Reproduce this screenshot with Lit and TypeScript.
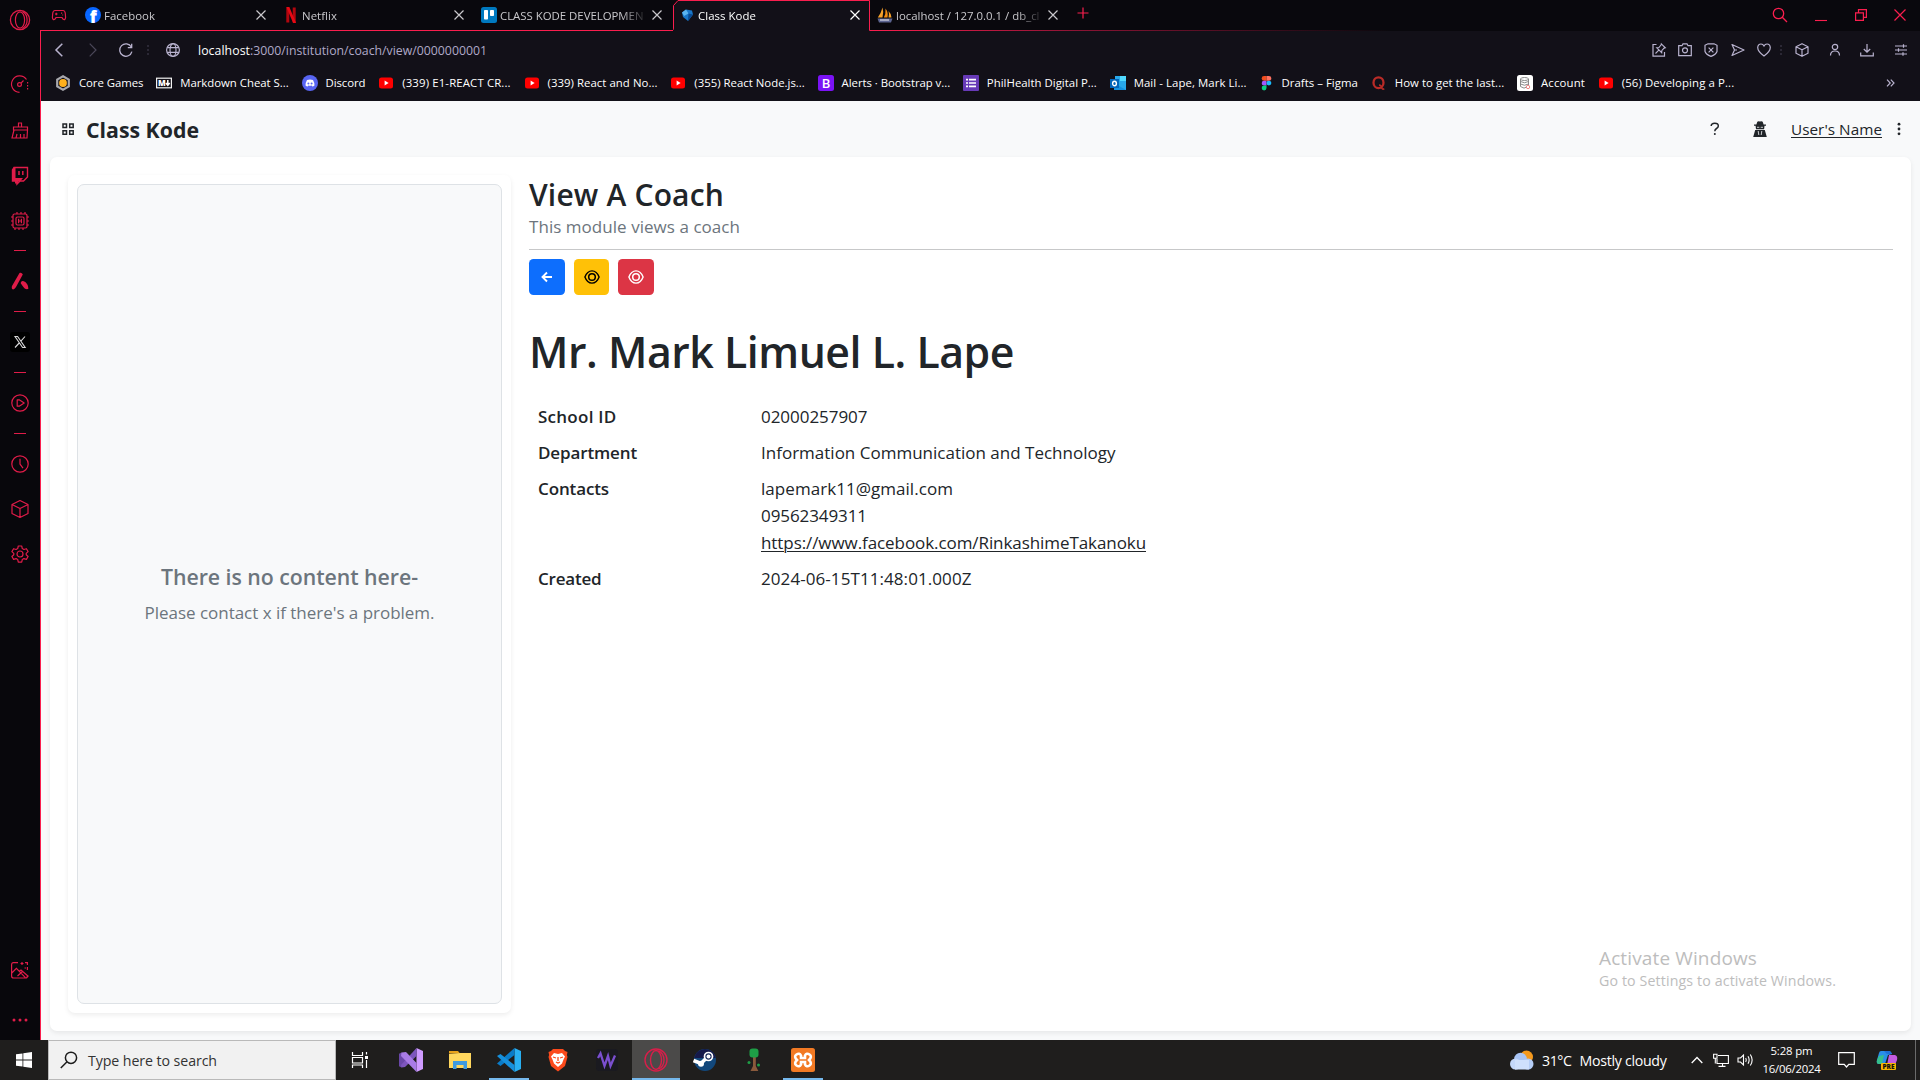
import { LitElement, html, svg, css, TemplateResult, SVGTemplateResult } from "lit";
import { customElement, property, query } from "lit/decorators.js";

/* Icons: each is drawn on its own small grid, one unit per pixel. */
const icon = (w: number, h: number, body: SVGTemplateResult) =>
  html`<svg class="icon" width=${w} height=${h} viewBox="0 0 ${w} ${h}" fill="none" stroke="currentColor" stroke-width="1.2">${body}</svg>`;

const closeX = icon(10, 10, svg`<path d="M.5 .5l9 9M9.5 .5l-9 9"/>`);

const side = {
  opera: icon(22, 22, svg`<circle cx="11" cy="11" r="9.6" stroke-width="1.3"/><ellipse cx="11" cy="11" rx="4.6" ry="8.2"/><path d="M13.5 2.6c3.2 1.8 4.6 5 4.6 8.4s-1.4 6.600-4.600 8.400"/>`),
  speed: icon(20, 20, svg`<path d="M9.500 18.300A8.200 8.200 0 1 1 16.500 5.500"/><path d="M17.600 8v9" stroke-dasharray="1.500 1.500"/><circle cx="9.500" cy="10.500" r="1.900"/><path d="M11 9.100l2.500-2.600"/>`),
  brush: icon(20, 20, svg`<path d="M8.500 7V3h3v4M3.500 7h14v3h-14zM4 10l-2 8h15l.5-8M7 14l-1 4M10.500 14v4M14 14v4"/>`),
  twitch: icon(20, 20, svg`<path d="M4 2.500h13.500v9.500l-4 4h-3.500l-3 3v-3H2.500V5z" stroke-width="1.400"/><path d="M2 4.500L5.500 2v11H9v3l-2 2.500H5V16H2zM9 13h4l-3 3.500H7z" fill="currentColor" stroke="none"/><path d="M9 6v4M12.800 6v4" stroke-width="1.500"/>`),
  cpu: icon(20, 20, svg`<rect x="3" y="3" width="14" height="14" rx="1.500"/><rect x="6" y="6" width="8" height="8" rx="1.500"/><path d="M8.600 7.800v4.400M11.400 7.800v4.400M8.600 10h2.800M7 3V1M11 3V1M15 3V1M5 17v2M9 17v2M13 17v2M3 6H1M3 10H1M3 14H1M17 6h2M17 10h2M17 14h2"/>`),
  aria: icon(20, 20, svg`<path d="M9.500 2c1.300-.8 2.500 0 3.300 1.600L6 16c-1 1.500-2 2.500-3 2.500C1.700 18 1.500 16.500 2 15zM13 10c3.500 1 5.500 4 5.300 8-2.500.6-4-.5-5.300-2.500l-2.300-3.300c0-1.200 1-2.500 2.300-2.200z" fill="currentColor" stroke="none"/>`),
  x: icon(20, 20, svg`<rect width="20" height="20" rx="3" fill="#000" stroke="none"/><path d="M5 4.500h2.600l7.600 11h-2.600zM15 4.500l-4.300 4.800M9.200 11L5 15.500" stroke="#d8d8d8" stroke-width="1.100"/>`),
  play: icon(20, 20, svg`<circle cx="10" cy="10" r="8.200"/><path d="M7.200 6.800v6.400h2L14.200 10 9.200 6.800z" stroke-linejoin="round"/>`),
  clock: icon(20, 20, svg`<circle cx="10" cy="10" r="8.200"/><path d="M10 4.800V10l3 4.200"/>`),
  cube: icon(20, 20, svg`<path d="M10 1.500l8 4v9l-8 4-8-4v-9zM2 5.500l8 4 8-4M10 9.500v9" stroke-linejoin="round"/>`),
  gear: icon(20, 20, svg`<circle cx="10" cy="10" r="3"/><path d="M8.300 2h3.400l.6 2.600 1.600.9 2.500-.8 1.700 2.900-1.900 1.800v1.300l1.900 1.800-1.700 2.900-2.500-.8-1.600.9-.6 2.600H8.300l-.6-2.600-1.600-.9-2.500.8-1.700-2.900 1.900-1.800V9.400L1.900 7.600l1.700-2.900 2.500.8 1.600-.9z" stroke-linejoin="round"/>`),
  image: icon(20, 20, svg`<path d="M8 2.600H3.500Q1.600 2.600 1.600 5v11q0 2 2 2h12q1.800 0 1.800-2M1.800 13l4.600-4.600 9 9.200M9 11.500l2-1.500 7.500 6.500M12 2v3M10.500 3.500h3M15 2.600h2.400V5M17.400 7v3M14.500 8h1.500M7.500 16l5-4.500"/>`),
  dots: icon(16, 4, svg`<g fill="currentColor" stroke="none"><circle cx="2" cy="2" r="1.500"/><circle cx="8" cy="2" r="1.500"/><circle cx="14" cy="2" r="1.500"/></g>`),
};

const youtube = icon(16, 16, svg`<rect x="1" y="2.500" width="14" height="11" rx="2.500" fill="#f00" stroke="none"/><path d="M6.600 5.600v4.800L10.600 8z" fill="#fff" stroke="none"/>`);

const fav = {
  facebook: icon(16, 16, svg`<circle cx="8" cy="8" r="8" fill="#0866ff" stroke="none"/><text class="f" x="8.300" y="15.800">f</text>`),
  netflix: icon(16, 16, svg`<g stroke="none" fill="#b1060f"><rect x="3.300" y=".5" width="3" height="15"/><rect x="9.700" y=".5" width="3" height="15"/><rect x="3.300" y="-.7" width="3" height="16" fill="#e50914" transform="skewX(23) translate(0 .8)"/></g>`),
  trello: icon(16, 16, svg`<rect width="16" height="16" rx="2.500" fill="#0079bf" stroke="none"/><rect x="3" y="3" width="4" height="9.500" rx=".8" fill="#fff" stroke="none"/><rect x="9" y="3" width="4" height="6" rx=".8" fill="#fff" stroke="none"/>`),
  kode: icon(16, 16, svg`<g stroke="none"><path d="M3 5.500l4-3 6 1 1 4-5 6.500-5-4z" fill="#1976c8"/><path d="M3 5.500l4-3 2.500 4L5 9z" fill="#5ab4f0"/><path d="M9.500 6.500l4.500 1-5 6.500z" fill="#0a4a92"/></g>`),
  pma: icon(16, 16, svg`<g stroke="none"><path d="M5.500 .5Q7 5 5.500 10.500H.8Q4 6.500 5.500 .5z" fill="#f5a12b"/><path d="M8.500 1.500q3 4 2 9H6.800Q9 7 8.500 1.500z" fill="#f08a10"/><path d="M11.500 4q3 3 3 6.500h-3Q12.500 7 11.500 4z" fill="#f5a12b"/><path d="M.5 11.500h15L14 15.500H2z" fill="#5c6490"/><path d="M3 13h9" stroke="#d8d8e4"/></g>`),
  core: icon(16, 16, svg`<path d="M8 1.300l5.800 3.300v6.800L8 14.700l-5.800-3.300V4.600z" stroke="#a8a8ad" stroke-width="2.200"/><circle cx="8" cy="8" r="3.900" fill="#ffb01c" stroke="none"/>`),
  markdown: icon(16, 16, svg`<rect x=".6" y="3.200" width="14.800" height="9.600" stroke="#f2f2f2"/><text class="m" x="2" y="11">M</text><path d="M11.800 5v4.500M9.900 8l1.900 2.300L13.700 8" stroke="#fff" stroke-width="1.500"/>`),
  discord: icon(16, 16, svg`<circle cx="8" cy="8" r="8" fill="#5865f2" stroke="none"/><path d="M5 5Q8 4 11 5q1.500 2.500 1.500 5.500Q11.500 11.500 10.300 11.600l-.6-1Q8 11 6.300 10.600l-.6 1Q4.500 11.500 3.500 10.500 3.500 7.500 5 5z" fill="#fff" stroke="none"/><g fill="#5865f2" stroke="none"><circle cx="6.400" cy="8.400" r="1"/><circle cx="9.600" cy="8.400" r="1"/></g>`),
  youtube,
  bootstrap: icon(16, 16, svg`<rect width="16" height="16" rx="2.500" fill="#7b13f6" stroke="none"/><text class="b" x="8" y="12.600">B</text>`),
  forms: icon(16, 16, svg`<rect width="16" height="16" rx="1" fill="#673ab7" stroke="none"/><path d="M6 4.700h7M6 8h7M6 11.300h7M3 4.700h2M3 8h2M3 11.300h2" stroke="#fff" stroke-width="1.700"/>`),
  outlook: icon(16, 16, svg`<g stroke="none"><rect x="5" y="1" width="11" height="14" fill="#28a8ea"/><rect x="10" y="1" width="6" height="5" fill="#50d9ff"/><path d="M4 8l12 7H4z" fill="#1490df"/><rect y="4" width="9" height="9" fill="#0364b8"/></g><ellipse cx="4.500" cy="8.500" rx="1.900" ry="2.200" stroke="#fff" stroke-width="1.400"/>`),
  figma: icon(14, 16, svg`<g stroke="none" transform="translate(.5 0)"><path d="M6 1H3.600a2.400 2.400 0 0 0 0 4.800H6z" fill="#f24e1e"/><path d="M6 1h2.400a2.400 2.400 0 0 1 0 4.800H6z" fill="#ff7262"/><path d="M6 5.800H3.600a2.400 2.400 0 0 0 0 4.800H6z" fill="#a259ff"/><circle cx="8.400" cy="8.100" r="2.400" fill="#1abcfe"/><path d="M6 10.600H3.600A2.400 2.400 0 1 0 6 13z" fill="#0acf83"/></g>`),
  quora: icon(16, 16, svg`<ellipse cx="7.500" cy="7.700" rx="5" ry="5.400" stroke="#b92b27" stroke-width="2.300"/><path d="M8 10q2.500 0 3 3.500 1 1 2.300.3" stroke="#b92b27" stroke-width="1.600"/>`),
  database: icon(16, 16, svg`<rect width="16" height="16" rx="2.500" fill="#fff" stroke="none"/><g stroke="#8a8a8a" stroke-width="1"><ellipse cx="7.500" cy="4" rx="4" ry="1.500"/><path d="M3.500 4v7.500q4 3 6 .5M3.500 6.500q4 2.500 8 0M3.500 9q4 2.500 8 0M11.500 4v6"/></g><circle cx="11" cy="12" r="1.700" stroke="#e88" stroke-width="1"/>`),
};

const nav = {
  back: icon(8, 14, svg`<path d="M7.300 .7L1 7l6.300 6.300" stroke-width="1.500"/>`),
  forward: icon(8, 14, svg`<path d="M.7 .7L7 7 .7 13.300"/>`),
  reload: icon(14, 14, svg`<path d="M12.900 8.600A6.200 6.200 0 1 1 12.300 4M12.700 .8V4.600H8.800" stroke-width="1.300"/>`),
  globe: icon(14, 14, svg`<circle cx="7" cy="7" r="6.400"/><ellipse cx="7" cy="7" rx="3" ry="6.400"/><path d="M1.200 4.600h11.600M1.200 9.400h11.600"/>`),
  pin: icon(14, 14, svg`<path d="M4.500 1.500H1v11.700h11.500V9"/><path d="M9.300 .8l4 4-1.200.3-2.200 2.400-.2 2.200-5-5 2.200-.2L9 2zM6.800 7.200L3.500 10.500" stroke-width="1.100"/>`),
  camera: icon(14, 14, svg`<path d="M.7 2.700H4L5 .8h4l1 1.900h3.300v10H.7z"/><circle cx="7" cy="7.300" r="2.500"/>`),
  shield: icon(14, 14, svg`<path d="M1 2.300L4 .8h6l3 1.500v6.200Q12 11.500 7 13.400 2 11.500 1 8.500zM4.600 4.600l4.800 4.800M9.400 4.600L4.600 9.400"/>`),
  send: icon(14, 14, svg`<path d="M1 1.500L13 7 1 12.500 3.500 7zM3.500 7H6" stroke-linejoin="round"/>`),
  heart: icon(14, 14, svg`<path d="M7 13Q.7 8.500 .7 4.500 1 1 4 1q2 0 3 2 1-2 3-2 3 0 3.300 3.500Q13.300 8.500 7 13z"/>`),
  cube: icon(14, 14, svg`<path d="M7 .7l6 3v6.600l-6 3-6-3V3.700zM1 3.700l6 3 6-3M7 6.700v6.600" stroke-linejoin="round"/>`),
  person: icon(12, 14, svg`<circle cx="6" cy="4" r="2.700"/><path d="M1.500 12.500Q1.500 8 6 8t4.500 4.500"/>`),
  download: icon(14, 14, svg`<path d="M7 1v8M3.800 6L7 9.200 10.200 6M.7 9.500v3.300h12.600V9.500"/>`),
  sliders: icon(14, 14, svg`<path d="M1 3h12M1 7h12M1 11h12M9.500 1.300v3.400M4.500 5.300v3.400M9 9.300v3.400"/>`),
  more: icon(9, 8, svg`<path d="M1 .7L4.200 4 1 7.300M4.800 .7L8 4 4.800 7.300"/>`),
  dots: icon(2, 12, svg`<path d="M1 1v2M1 5v2M1 9v2" stroke-width="1.500"/>`),
  gamepad: icon(16, 12, svg`<path d="M4 1.500h8q2 0 2.300 3l.3 4q-.3 2.500-2 2-1-.5-1.600-2H5q-.6 1.500-1.600 2-1.700.5-2-2l.3-4q.3-3 2.300-3zM4 5h2.600M5.300 3.700v2.600M10 4.200h1.200M11.200 6h1" stroke-linejoin="round"/>`),
  plus: icon(12, 12, svg`<path d="M6 .5v11M.5 6h11"/>`),
  search: icon(16, 16, svg`<circle cx="6.500" cy="6.500" r="5.200" stroke-width="1.300"/><path d="M10.300 10.300l4.700 4.700" stroke-width="1.300"/>`),
  min: icon(12, 14, svg`<path d="M0 12.500h12" stroke-width="1.100"/>`),
  restore: icon(12, 12, svg`<path d="M.6 3.800h7.800v7.600H.6zM3.500 3.800V.6h7.900v7.800h-3"/>`),
  close: icon(12, 12, svg`<path d="M.5 .5l11 11M11.500 .5l-11 11"/>`),
};

const page = {
  grid: icon(14, 14, svg`<path d="M2 2h3.500v3.500H2zM8.700 2h3.500v3.500H8.700zM2 8.700h3.500v3.500H2zM8.700 8.700h3.500v3.500H8.700z" stroke-width="1.500"/>`),
  help: icon(10, 14, svg`<path d="M1.200 4Q1.200 1.200 4.800 1.200T8.300 4Q8.300 5.500 6.500 6.500 4.800 7.500 4.800 9.300" stroke-width="1.500"/><circle cx="4.800" cy="12" r="1" fill="currentColor" stroke="none"/>`),
  secret: icon(14, 16, svg`<g fill="currentColor" stroke="none"><path d="M4.300 .8Q5 0 7 .6q2-.6 2.700.2l.9 2.600H13v1.400h-1.500l-.4 3.400H3l-.4-3.400H1V3.400h2.400zM2.200 9h9.600l2 7H.2z"/></g><path d="M4 6.300h2.300M7.700 6.300H10M5.200 10l.6 4M8.800 10l-.6 4" stroke="#f8f9fa" stroke-width=".8"/>`),
  dots: icon(4, 14, svg`<g fill="currentColor" stroke="none"><circle cx="2" cy="2.200" r="1.400"/><circle cx="2" cy="7" r="1.400"/><circle cx="2" cy="11.800" r="1.400"/></g>`),
  arrow: icon(12, 12, svg`<path d="M11 6H1.500M6 1.500L1.500 6 6 10.500" stroke-width="1.900"/>`),
  eye: icon(16, 14, svg`<path d="M.9 7Q3.200 .9 8 .9t7.100 6.100q-2.300 6.100-7.100 6.100T.9 7z" stroke-width="1.400"/><circle cx="8" cy="7" r="3.300" stroke-width="1.500"/>`),
};

const task = {
  windows: icon(16, 16, svg`<path d="M0 2.300L6.500 1.400v6.200H0zM7.300 1.300L16 0v7.600H7.300zM0 8.400h6.500v6.200L0 13.700zM7.300 8.400H16V16l-8.700-1.300z" fill="#fff" stroke="none"/>`),
  search: icon(18, 18, svg`<circle cx="11" cy="6.800" r="5.600" stroke="#1c1c1c" stroke-width="1.500"/><path d="M7 10.800L.8 17" stroke="#1c1c1c" stroke-width="1.500"/>`),
  view: icon(18, 16, svg`<path d="M1.500 0v3.500h10V0M1.500 5.500h10v5.500h-10zM1.500 16v-3h10v3M15.500 0v2.500M15.500 8v8" stroke="#fff"/><rect x="14" y="4" width="3" height="3" fill="#fff" stroke="none"/>`),
  vs: icon(24, 24, svg`<g stroke="none"><path d="M0 5.800L2.500 4.500 6 8v8l-3.500 3.500L0 18.200z" fill="#6a47a8"/><path d="M17.500 0L24 3v18l-6.500 3z" fill="#cf9bff"/><path d="M17.500 0v8L6 19l-3.500.5L2 17z" fill="#7d55bd"/><path d="M2.500 4.500L7 4l10.500 11V24L2 8z" fill="#a97be6"/></g>`),
  folder: icon(22, 20, svg`<g stroke="none"><path d="M0 1h9l2 2.500H0z" fill="#e8a21a"/><path d="M0 4l11-1h11v15H0z" fill="#ffd75e"/><path d="M4 11h14v8h-3.500v-4h-7v4H4z" fill="#3e9ae0"/></g>`),
  code: icon(24, 24, svg`<g stroke="none"><path d="M17.500 0L24 3v18l-6.500 3z" fill="#29b0f2"/><path d="M17.500 0v7L3.500 18 0 15.500z" fill="#0a7cc8"/><path d="M0 8l3.500-2 14 11v7z" fill="#1690dc"/></g>`),
  brave: icon(20, 24, svg`<path d="M5 1h10l2 2 2.500 1-.6 3 .6 2-2.500 9-7 5.500L3 18 .5 9l.6-2-.6-3L3 3z" fill="#fb4a1c" stroke="none"/><path d="M6 5l4 1 4-1 3 3.500-1.500 3-1.500 4L10 19l-4-3.500-1.500-4L3 8.500z" fill="#fff" stroke="none"/><path d="M5 9l3 1M15 9l-3 1M10 9v4M8 14l2 1 2-1" stroke="#fb4a1c" stroke-width="1.300"/>`),
  wave: icon(22, 22, svg`<rect width="22" height="22" rx="3" fill="#1a1a20" stroke="none"/><path d="M2 9l2.500-4.500 4 12.500 3.500-10 2.500 10L19 6.500" stroke="#7b4fd0" stroke-width="2.300"/>`),
  opera: icon(24, 24, svg`<g stroke="#d81e4a"><circle cx="12" cy="12" r="11" stroke-width="1.400"/><ellipse cx="12" cy="12" rx="5.500" ry="9.500" stroke-width="1.400"/><path d="M14.500 2.800c4 1.800 5.500 5.500 5.500 9.200s-1.500 7.400-5.500 9.200" stroke-width="1.300"/></g>`),
  steam: icon(24, 24, svg`<circle cx="12" cy="12" r="11" fill="#12487c" stroke="none"/><path d="M1.200 10A11 11 0 0 1 22.800 10z" fill="#15194a" stroke="none"/><path d="M.5 12.500l7.500 3L15.500 8" stroke="#fff" stroke-width="3.600"/><circle cx="15.500" cy="8.500" r="4" fill="#1b2c5c" stroke="#fff" stroke-width="1.700"/><circle cx="15.500" cy="8.500" r="2" fill="#fff" stroke="none"/><circle cx="8" cy="15.700" r="3" fill="#fff" stroke="none"/>`),
  tree: icon(14, 24, svg`<g stroke="none"><path d="M6 8h2.800v10l2.500 5H3.500L6 18z" fill="#8a5a3c"/><rect x="2.500" y=".5" width="9" height="9" rx="3" fill="#1e9e46"/><circle cx="2" cy="14.500" r="1.500" fill="#1e9e46"/><circle cx="11.500" cy="17" r="1.500" fill="#1e9e46"/></g>`),
  xampp: icon(24, 24, svg`<rect width="24" height="24" rx="2.500" fill="#f27a24" stroke="none"/><path d="M5.500 6.500q3-2 4.500 1v2.500h4V7.500q1.500-3 4.500-1t-.5 5.500q3.500 3.500.5 5.500t-4.500-1V14h-4v2.500q-1.500 3-4.500 1T6 12Q2.500 8.500 5.500 6.500z" stroke="#fff" stroke-width="2.600"/>`),
  weather: icon(24, 20, svg`<g stroke="none"><circle cx="16.500" cy="7" r="6.500" fill="#f59a1e"/><circle cx="10.500" cy="9" r="6.300" fill="#a9c5f5"/><circle cx="5.500" cy="14" r="5.500" fill="#c4d8fa"/><circle cx="18" cy="14" r="5.500" fill="#b5cdf6"/><rect x="5" y="10" width="14" height="9.500" fill="#cfe0fc"/></g>`),
  chevron: icon(12, 8, svg`<path d="M.7 7L6 1.500 11.300 7" stroke="#fff" stroke-width="1.300"/>`),
  network: icon(16, 14, svg`<path d="M5 2.500h10.400v8H4V6M.6 1.200H4v4H.6zM2.300 5v5.500M9.500 10.500v2.800M5.500 13.400h7" stroke="#fff" stroke-width="1.100"/>`),
  sound: icon(17, 14, svg`<path d="M1 5h2.500L6.500 2v10l-3-3H1zM8.700 5q1.200 2 0 4M11 3.300q2.300 3.700 0 7.400M13.300 1.500q3.700 5.500 0 11" stroke="#fff" stroke-width="1.100"/>`),
  note: icon(17, 16, svg`<path d="M.7 .7h15.600v11.600h-5.500L8.500 15l-2.300-2.700H.7z" stroke="#fff" stroke-width="1.200"/>`),
  copilot: icon(22, 20, svg`<g stroke="none"><path d="M5 1h8q2 0 3 3l-4 1-3 9H3Q0 14 1 10L3 3Q3.500 1 5 1z" fill="#2a8fe8"/><path d="M3 6l5-1-2 9H3Q0 14 1 10z" fill="#35c08c"/><path d="M13 5h6q3 1 2 5l-2 5h-8z" fill="#c45be0"/><path d="M8 1h5q2 0 3 3h-5z" fill="#1f6fd6"/><rect x="5" y="13" width="15" height="7" rx="1" fill="#f7b500"/></g><text class="pre" x="12.500" y="19">PRE</text>`),
};

/* A single line of text tracked so that it occupies the given measure. */
@customElement("fit-text")
export class FitText extends LitElement {
  @property({ type: Number }) w = 0;
  @query(".run") run!: HTMLSpanElement;
  static styles = css`
    :host { display: inline-block; white-space: pre; flex: none; }
    .run { display: inline-block; text-decoration: inherit; }
  `;
  firstUpdated() {
    this.style.width = `${this.w}px`;
    const fit = () => {
      this.run.style.letterSpacing = "0px";
      const count = (this.textContent ?? "").length;
      const natural = this.run.getBoundingClientRect().width;
      if (count && natural) this.run.style.letterSpacing = `${(this.w - natural) / count}px`;
    };
    fit();
    document.fonts.ready.then(fit);
  }
  render() {
    return html`<span class="run"><slot></slot></span>`;
  }
}

const t = (w: number, text: string, cls = "") => html`<fit-text class=${cls} w=${w}>${text}</fit-text>`;

const shared = css`
  * { box-sizing: border-box; }
  .icon { display: block; flex: none; overflow: visible; }
  :host { font-family: "Open Sans", "Noto Sans", sans-serif; }
`;

@customElement("gx-sidebar")
export class GxSidebar extends LitElement {
  static styles = [shared, css`
    :host { display: flex; flex-direction: column; align-items: center; width: 41px; background: #08070c; color: #e01c49; padding-right: 1px; }
    .slot { display: flex; align-items: center; justify-content: center; flex: none; width: 40px; }
    .logo { height: 40px; margin-bottom: 21px; }
    .tool { height: 45.700px; }
    .tool + .rule { margin-top: 1.200px; }
    .rule { height: 11px; }
    .rule::after { content: ""; width: 12px; height: 1px; background: #e01c49; }
    .app { height: 50px; }
    .box { height: 40px; }
    .grow { flex: 1; }
    .more { height: 40px; margin-top: 5px; }
  `];
  render() {
    const s = (cls: string, i: unknown = "") => html`<div class="slot ${cls}">${i}</div>`;
    return html`
      ${s("logo", side.opera)}${s("tool", side.speed)}${s("tool", side.brush)}${s("tool", side.twitch)}${s("tool", side.cpu)}
      ${s("rule")}${s("app", side.aria)}${s("rule")}${s("app", side.x)}${s("rule")}${s("app", side.play)}${s("rule")}
      ${s("app", side.clock)}${s("box", side.cube)}${s("app", side.gear)}
      <div class="grow"></div>${s("app", side.image)}${s("more", side.dots)}`;
  }
}

interface Tab { icon: TemplateResult; title: string; w: number; active?: boolean; }
const tabs: Tab[] = [
  { icon: fav.facebook, title: "Facebook", w: 51 },
  { icon: fav.netflix, title: "Netflix", w: 35 },
  { icon: fav.trello, title: "CLASS KODE DEVELOPMEN", w: 143.500 },
  { icon: fav.kode, title: "Class Kode", w: 58, active: true },
  { icon: fav.pma, title: "localhost / 127.0.0.1 / db_cl", w: 143.500 },
];

const bookmarks: [TemplateResult, string, number][] = [
  [fav.core, "Core Games", 64.500],
  [fav.markdown, "Markdown Cheat S...", 108.500],
  [fav.discord, "Discord", 40],
  [fav.youtube, "(339) E1-REACT CR...", 108.500],
  [fav.youtube, "(339) React and No...", 110],
  [fav.youtube, "(355) React Node.js...", 110.500],
  [fav.bootstrap, "Alerts · Bootstrap v...", 108.500],
  [fav.forms, "PhilHealth Digital P...", 110],
  [fav.outlook, "Mail - Lape, Mark Li...", 113],
  [fav.figma, "Drafts – Figma", 76.500],
  [fav.quora, "How to get the last...", 109.500],
  [fav.database, "Account", 44],
  [fav.youtube, "(56) Developing a P...", 112.500],
];

@customElement("gx-chrome")
export class GxChrome extends LitElement {
  static styles = [shared, css`
    :host { display: block; background: #121018; color: #b9b3cf; border-left: 1px solid #fa1e4e; margin-left: -1px; }
    .strip { display: flex; height: 31px; background: #09080d; color: #fa1e4e; margin-left: -1px; }
    .lead { width: 39px; display: flex; align-items: center; justify-content: center; padding-right: 2px; color: #e01c49; border-bottom: 1px solid #fa1e4e; }
    .tab { position: relative; width: 198px; display: flex; align-items: center; padding-left: 6px; border-bottom: 1px solid #fa1e4e; color: #c9c8cc; font-size: 11.400px; }
    .tab .title { width: 144px; margin-left: 3px; overflow: hidden; white-space: nowrap; -webkit-mask-image: linear-gradient(90deg, #000 84%, rgba(0, 0, 0, .15) 100%); mask-image: linear-gradient(90deg, #000 84%, rgba(0, 0, 0, .15) 100%); }
    .tab .x { margin-left: 7.700px; }
    .tab.active { border: 0; color: #fff; padding-bottom: 1px; }
    .edge { position: absolute; left: 0; top: 0; }
    .tab > .icon, .title, .x { z-index: 1; }
    .rest { flex: 1; display: flex; align-items: flex-start; padding: 7px 14px 0 7.500px; border-bottom: 1px solid; border-image: linear-gradient(90deg, #8f1435, transparent 38%) 1; }
    .tab.last { border-image: linear-gradient(90deg, #fa1e4e, #8f1435) 1; }
    .rest .push { flex: 1; }
    .win { display: flex; gap: 27.500px; align-items: center; }
    .bar { display: flex; align-items: center; height: 38px; padding: 0 12px 0 14px; }
    .dim { color: #4b4759; }
    .faint { color: #34313f; }
    .url { font-size: 12.300px; margin-left: 18px; color: #b0a9c8; display: flex; }
    .host { color: #fff; }
    .push { flex: 1; }
    .tools { display: flex; align-items: center; }
    .marks { display: flex; align-items: center; height: 33px; gap: 12.900px; padding: 0 25px 4px 14px; font-size: 11.400px; color: #fff; margin-top: -1px; }
    .mark { display: flex; align-items: center; gap: 7.900px; }
    .f { font: 800 17px "Open Sans"; fill: #fff; stroke: none; text-anchor: middle; }
    .m { font: 800 8px "Open Sans"; fill: #fff; stroke: none; }
    .b { font: 600 13px "Open Sans"; fill: #fff; stroke: none; text-anchor: middle; }
    .g26 { width: 26px; } .g22 { width: 22px; } .g17 { width: 17px; } .g9 { width: 9px; }
    .g12 { width: 12px; } .g13 { width: 13px; } .g14 { width: 14px; } .g19 { width: 19px; } .g20 { width: 20px; } .g21 { width: 21px; }
    .more { color: #b9b3cf; }
  `];
  render() {
    const g = (n: number) => html`<span class="g${n}"></span>`;
    return html`
      <div class="strip">
        <div class="lead">${nav.gamepad}</div>
        ${tabs.map((tab, i) => html`
          <div class="tab ${tab.active ? "active" : ""} ${i === tabs.length - 1 ? "last" : ""}">
            ${tab.active ? html`<svg class="edge" width="198" height="31" viewBox="0 0 198 31"><path d="M0 31V30.500Q.5 30.500 .5 28V5L5.500 .5H196.500V30.500H198V31z" fill="#121018"/><path d="M-1 30.500Q.5 30.500 .5 28V5.500L5 .5H196.500V30.500H198" fill="none" stroke="#fa1e4e"/></svg>` : ""}
            ${tab.icon}<div class="title">${t(tab.w, tab.title)}</div><div class="x">${closeX}</div>
          </div>`)}
        <div class="rest">${nav.plus}<span class="push"></span><div class="win">${nav.search}${nav.min}${nav.restore}${nav.close}</div></div>
      </div>
      <div class="bar">
        ${nav.back}${g(26)}<span class="dim">${nav.forward}</span>${g(22)}${nav.reload}${g(14)}<span class="faint">${nav.dots}</span>${g(17)}${nav.globe}
        <div class="url">${t(52, "localhost", "host")}${t(237, ":3000/institution/coach/view/0000000001")}</div>
        <span class="push"></span>
        <div class="tools">${nav.pin}${g(12)}${nav.camera}${g(12)}${nav.shield}${g(13)}${nav.send}${g(12)}${nav.heart}${g(9)}<span class="faint">${nav.dots}</span>${g(13)}${nav.cube}${g(20)}${nav.person}${g(19)}${nav.download}${g(20)}${nav.sliders}</div>
      </div>
      <div class="marks">
        ${bookmarks.map(([i, label, w]) => html`<div class="mark">${i}${t(w, label)}</div>`)}
        <span class="push"></span><span class="more">${nav.more}</span>
      </div>`;
  }
}

@customElement("coach-page")
export class CoachPage extends LitElement {
  static styles = [shared, css`
    :host { position: relative; display: flex; flex-direction: column; flex: 1; background: #f8f9fa; color: #212529; font-size: 17px; line-height: 27px; }
    header { display: flex; align-items: center; height: 56px; padding: 0 19px 0 20px; }
    .brand { font-weight: 700; font-size: 21.300px; margin-left: 11px; margin-top: 1px; }
    .grow { flex: 1; }
    .help { margin-right: 33px; }
    .secret { margin-right: 24px; }
    .user { font-size: 15.300px; line-height: 16px; border-bottom: 1px solid #212529; margin-right: 15px; }
    .card { flex: 1; display: flex; margin: 0 9px 9px; padding: 18px; background: #fff; border-radius: 7px; box-shadow: 0 2px 5px rgba(0, 0, 0, .075); }
    .panel { width: 443px; padding: 9px; border-radius: 7px; box-shadow: 0 2px 5px rgba(0, 0, 0, .075); display: flex; }
    .empty { flex: 1; border: 1px solid #dee2e6; border-radius: 7px; background: #f8f9fa; color: #6c757d; display: flex; flex-direction: column; align-items: center; justify-content: center; }
    .empty h5 { margin: 0 0 9px; font-size: 21.300px; font-weight: 600; line-height: 27px; }
    .content { flex: 1; padding-left: 18px; margin-top: -1px; }
    h2 { margin: 3px 0 0; font-size: 30px; line-height: 35px; font-weight: 600; }
    .sub { color: #6c757d; margin: 1px 0 9px; }
    hr { border: 0; height: 1px; background: #c7c8c9; margin: 0 0 9px; }
    .buttons { display: flex; gap: 9px; }
    .btn { width: 36px; height: 36px; border-radius: 4.500px; display: flex; align-items: center; justify-content: center; color: #fff; }
    .back { background: #0d6efd; }
    .warn { background: #ffc107; color: #000; width: 35px; }
    .danger { background: #dc3545; }
    h1 { margin: 30px 0 24px; font-size: 42.800px; line-height: 54px; font-weight: 600; }
    dl { display: grid; grid-template-columns: 223px 1fr; margin: 0; padding: 0 9px; row-gap: 9px; }
    dt { font-weight: 600; }
    dd { margin: 0; display: flex; flex-direction: column; align-items: flex-start; }
    .link { height: 25px; margin-bottom: 2px; line-height: 27px; text-decoration: underline; text-decoration-thickness: 1px; text-underline-offset: 1.500px; }
    .link fit-text { text-decoration: inherit; }
    .activate { position: absolute; left: 1558px; top: 844px; color: #bdbdbd; }
    .activate div { font-size: 19px; line-height: 26px; }
    .activate div + div { font-size: 14.200px; line-height: 20px; }
  `];
  render() {
    return html`
      <header>
        ${page.grid}<div class="brand">${t(113, "Class Kode")}</div><span class="grow"></span>
        <span class="help">${page.help}</span><span class="secret">${page.secret}</span>
        <div class="user">${t(91, "User's Name")}</div>${page.dots}
      </header>
      <main class="card">
        <section class="panel"><div class="empty">
          <h5>${t(257, "There is no content here-")}</h5>
          <div>${t(290, "Please contact x if there's a problem.")}</div>
        </div></section>
        <section class="content">
          <h2>${t(195, "View A Coach")}</h2>
          <div class="sub">${t(211, "This module views a coach")}</div>
          <hr />
          <div class="buttons">
            <div class="btn back">${page.arrow}</div><div class="btn warn">${page.eye}</div><div class="btn danger">${page.eye}</div>
          </div>
          <h1>${t(485, "Mr. Mark Limuel L. Lape")}</h1>
          <dl>
            <dt>${t(78.500, "School ID")}</dt><dd>${t(106.500, "02000257907")}</dd>
            <dt>${t(99, "Department")}</dt><dd>${t(354.500, "Information Communication and Technology")}</dd>
            <dt>${t(71, "Contacts")}</dt>
            <dd>${t(192, "lapemark11@gmail.com")}${t(106, "09562349311")}<span class="link">${t(385, "https://www.facebook.com/RinkashimeTakanoku")}</span></dd>
            <dt>${t(63.500, "Created")}</dt><dd>${t(210.500, "2024-06-15T11:48:01.000Z")}</dd>
          </dl>
        </section>
      </main>
      <div class="activate"><div>${t(158, "Activate Windows")}</div><div>${t(237, "Go to Settings to activate Windows.")}</div></div>`;
  }
}

@customElement("win-taskbar")
export class WinTaskbar extends LitElement {
  static styles = [shared, css`
    :host { display: flex; height: 40px; background: #1f1e1d; color: #fff; font-size: 14.200px; }
    .start { width: 48px; display: flex; align-items: center; justify-content: center; }
    .search { width: 288px; background: #f1f1f1; border: 1px solid #b9b9b9; display: flex; align-items: center; gap: 10px; padding-left: 11px; color: #333; }
    .apps { display: flex; flex: 1; }
    .app { width: 49px; padding: 0 4.500px; display: flex; }
    .app.first { margin-right: 2px; margin-left: -1px; }
    .app div { flex: 1; display: flex; align-items: center; justify-content: center; border-bottom: 2px solid transparent; padding-top: 1px; }
    .app.open div { border-color: #76b9ed; }
    .app.current { padding: 0; background: #4b4a49; width: 48px; margin: 0 0 0 1px; }
    .tray { display: flex; align-items: center; }
    .weather { display: flex; align-items: center; gap: 8px; margin-right: 24px; }
    .time { font-size: 11.400px; line-height: 17.500px; display: flex; flex-direction: column; align-items: center; margin: -1px 17.500px 0 8.500px; }
    .gap { margin-right: 10.500px; } .gap8 { margin-right: 8px; } .gap21 { margin-right: 21px; }
    .peek { width: 5px; height: 40px; border-left: 1px solid #6b6b6b; margin-left: 17px; }
    .pre { font: 800 6.500px "Open Sans"; fill: #111; stroke: none; text-anchor: middle; }
  `];
  render() {
    const a = (i: TemplateResult, cls = "") => html`<div class="app ${cls}"><div>${i}</div></div>`;
    return html`
      <div class="start">${task.windows}</div>
      <div class="search">${task.search}${t(129, "Type here to search")}</div>
      <div class="apps">${a(task.view, "first")}${a(task.vs)}${a(task.folder)}${a(task.code, "open")}${a(task.brave)}${a(task.wave)}${a(task.opera, "open current")}${a(task.steam)}${a(task.tree)}${a(task.xampp, "open")}</div>
      <div class="tray">
        <div class="weather">${task.weather}${t(29.500, "31°C")}${t(87, "Mostly cloudy")}</div>
        <span class="gap">${task.chevron}</span><span class="gap8">${task.network}</span>${task.sound}
        <div class="time">${t(42, "5:28 pm")}${t(58, "16/06/2024")}</div>
        <span class="gap21">${task.note}</span>${task.copilot}<div class="peek"></div>
      </div>`;
  }
}

@customElement("app-root")
export class AppRoot extends LitElement {
  static styles = [shared, css`
    :host { display: grid; grid-template-rows: 1040px 40px; width: 1920px; height: 1080px; overflow: hidden; }
    .window { display: flex; min-height: 0; }
    .main { flex: 1; min-width: 0; display: flex; flex-direction: column; }
    .below { display: flex; flex: 1; margin-left: -1px; border-left: 1px solid #fa1e4e; }
    gx-sidebar { flex: none; }
  `];
  render() {
    return html`
      <div class="window">
        <gx-sidebar></gx-sidebar>
        <div class="main"><gx-chrome></gx-chrome><div class="below"><coach-page></coach-page></div></div>
      </div>
      <win-taskbar></win-taskbar>`;
  }
}
